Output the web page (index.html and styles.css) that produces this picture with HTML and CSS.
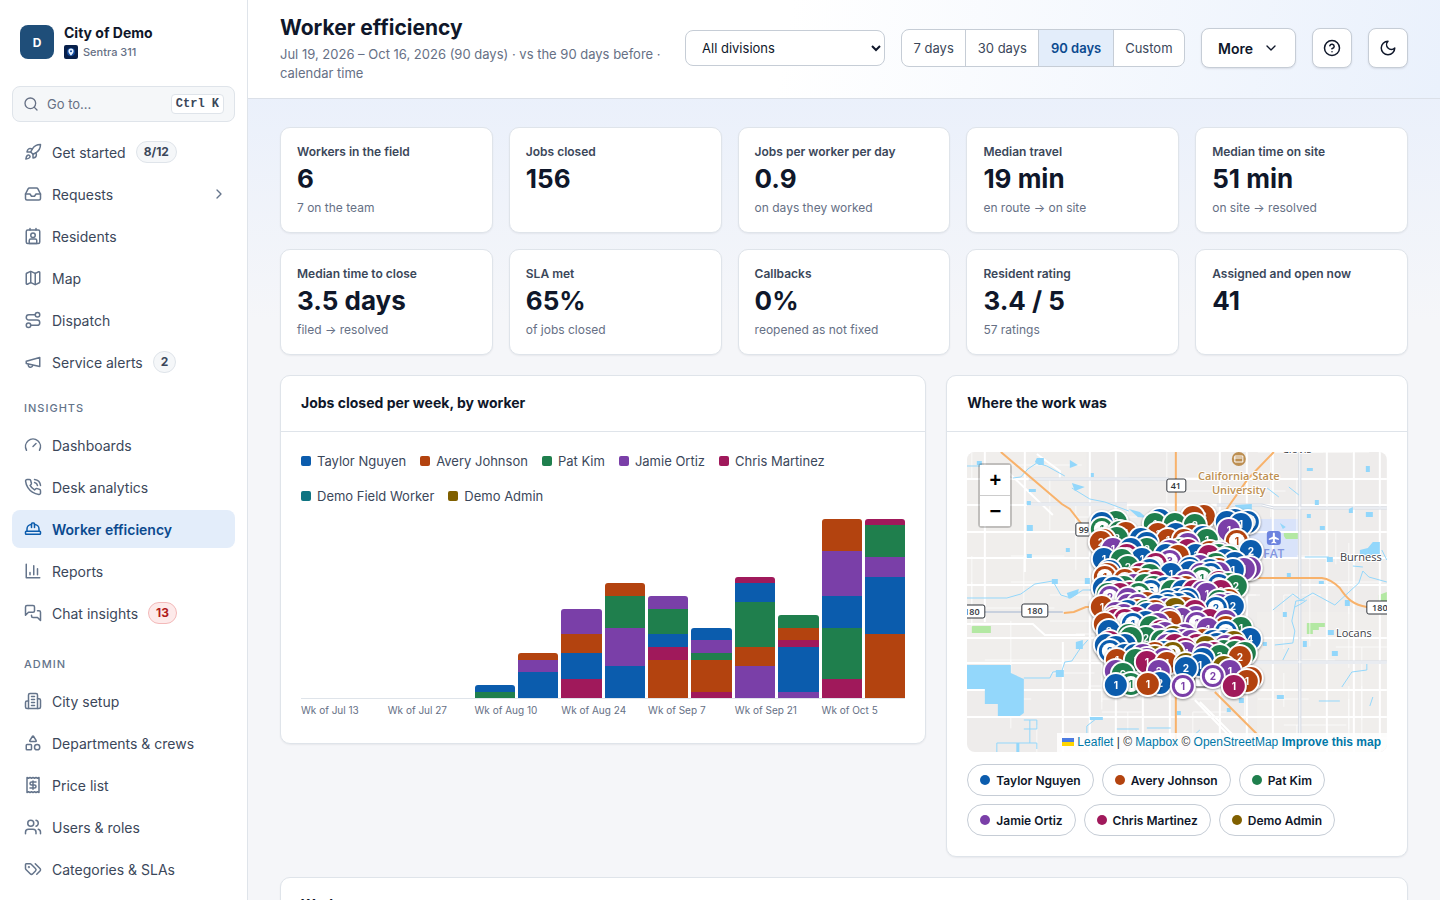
FILE: index.html
```html
<!DOCTYPE html>
<html lang="en">
<head>
<meta charset="utf-8">
<meta name="viewport" content="width=device-width, initial-scale=1">
<title>Worker efficiency</title>
<link rel="stylesheet" href="styles.css">
</head>
<body>
<div class="app">
  <aside class="sidebar">
    <div class="brand">
      <span class="brand-logo">D</span>
      <div class="brand-text">
        <span class="brand-name">City of Demo</span>
        <span class="brand-product">
          <svg width="14" height="14" viewBox="0 0 14 14" aria-hidden="true"><rect width="14" height="14" rx="2" fill="#071f4a"/><circle cx="7" cy="7" r="4" fill="#124a9c"/><path d="M7 3.6a2.6 2.6 0 0 0-2.6 2.6C4.400 8 7 10.600 7 10.600S9.600 8 9.600 6.200A2.600 2.600 0 0 0 7 3.600z" fill="#e8f2ff"/><circle cx="7" cy="6.300" r="1" fill="#124a9c"/></svg>
          Sentra 311
        </span>
      </div>
    </div>
    <button class="search" type="button">
      <svg class="icon" viewBox="0 0 24 24"><circle cx="11" cy="11" r="8"/><path d="m21 21-4.300-4.300"/></svg>
      <span class="search-text">Go to...</span>
      <kbd>Ctrl K</kbd>
    </button>
    <nav class="nav" aria-label="Main">
      <div class="nav-group">
        <a class="nav-item" href="#"><svg class="icon" viewBox="0 0 24 24"><path d="M4.500 16.500c-1.500 1.260-2 5-2 5s3.740-.5 5-2c.71-.84.7-2.130-.09-2.910a2.180 2.180 0 0 0-2.910-.09z"/><path d="m12 15-3-3a22 22 0 0 1 2-3.950A12.880 12.880 0 0 1 22 2c0 2.720-.78 7.500-6 11a22.350 22.350 0 0 1-4 2z"/><path d="M9 12H4s.55-3.030 2-4c1.620-1.080 5 0 5 0"/><path d="M12 15v5s3.030-.55 4-2c1.080-1.620 0-5 0-5"/></svg>Get started<span class="badge">8/12</span></a>
        <a class="nav-item" href="#"><svg class="icon" viewBox="0 0 24 24"><path d="M22 12h-6l-2 3h-4l-2-3H2"/><path d="M5.450 5.110 2 12v6a2 2 0 0 0 2 2h16a2 2 0 0 0 2-2v-6l-3.450-6.890A2 2 0 0 0 16.760 4H7.240a2 2 0 0 0-1.790 1.110z"/></svg>Requests<svg class="icon chevron" viewBox="0 0 24 24"><path d="m9 18 6-6-6-6"/></svg></a>
        <a class="nav-item" href="#"><svg class="icon" viewBox="0 0 24 24"><path d="M17 18a2 2 0 0 0-2-2H9a2 2 0 0 0-2 2v4h10z"/><rect x="3" y="4" width="18" height="18" rx="2"/><circle cx="12" cy="11" r="3"/><path d="M8 2v2M16 2v2"/></svg>Residents</a>
        <a class="nav-item" href="#"><svg class="icon" viewBox="0 0 24 24"><path d="M14.106 5.553a2 2 0 0 0 1.788 0l3.659-1.830A1 1 0 0 1 21 4.619v12.764a1 1 0 0 1-.553.894l-4.553 2.277a2 2 0 0 1-1.788 0l-4.212-2.106a2 2 0 0 0-1.788 0l-3.659 1.830A1 1 0 0 1 3 19.381V6.618a1 1 0 0 1 .553-.894l4.553-2.277a2 2 0 0 1 1.788 0z"/><path d="M15 5.764v15M9 3.236v15"/></svg>Map</a>
        <a class="nav-item" href="#"><svg class="icon" viewBox="0 0 24 24"><circle cx="6" cy="19" r="3"/><path d="M9 19h8.500a3.500 3.500 0 0 0 0-7h-11a3.500 3.500 0 0 1 0-7H15"/><circle cx="18" cy="5" r="3"/></svg>Dispatch</a>
        <a class="nav-item" href="#"><svg class="icon" viewBox="0 0 24 24"><path d="m3 11 18-5v12L3 14v-3z"/><path d="M11.600 16.800a3 3 0 1 1-5.800-1.600"/></svg>Service alerts<span class="badge">2</span></a>
      </div>
      <h2 class="nav-title">Insights</h2>
      <div class="nav-group">
        <a class="nav-item" href="#"><svg class="icon" viewBox="0 0 24 24"><path d="m12 14 4-4"/><path d="M3.340 19a10 10 0 1 1 17.320 0"/></svg>Dashboards</a>
        <a class="nav-item" href="#"><svg class="icon" viewBox="0 0 24 24"><path d="M22 16.920v3a2 2 0 0 1-2.180 2 19.790 19.790 0 0 1-8.630-3.070 19.500 19.500 0 0 1-6-6 19.790 19.790 0 0 1-3.070-8.670A2 2 0 0 1 4.110 2h3a2 2 0 0 1 2 1.720c.127.960.361 1.903.7 2.810a2 2 0 0 1-.45 2.110L8.090 9.910a16 16 0 0 0 6 6l1.270-1.270a2 2 0 0 1 2.110-.45c.907.339 1.850.573 2.810.7A2 2 0 0 1 22 16.920z"/><path d="M14.050 2a9 9 0 0 1 8 7.940M14.050 6A5 5 0 0 1 18 10"/></svg>Desk analytics</a>
        <a class="nav-item active" href="#" aria-current="page"><svg class="icon" viewBox="0 0 24 24"><path d="M2 18a1 1 0 0 0 1 1h18a1 1 0 0 0 1-1v-2a1 1 0 0 0-1-1H3a1 1 0 0 0-1 1v2z"/><path d="M10 10V5a1 1 0 0 1 1-1h2a1 1 0 0 1 1 1v5"/><path d="M4 15v-3a6 6 0 0 1 6-6M14 6a6 6 0 0 1 6 6v3"/></svg>Worker efficiency</a>
        <a class="nav-item" href="#"><svg class="icon" viewBox="0 0 24 24"><path d="M3 3v18h18M18 17V9M13 17V5M8 17v-3"/></svg>Reports</a>
        <a class="nav-item" href="#"><svg class="icon" viewBox="0 0 24 24"><path d="M14 9a2 2 0 0 1-2 2H6l-4 4V4a2 2 0 0 1 2-2h8a2 2 0 0 1 2 2z"/><path d="M18 9h2a2 2 0 0 1 2 2v11l-4-4h-6a2 2 0 0 1-2-2v-1"/></svg>Chat insights<span class="badge alert">13</span></a>
      </div>
      <h2 class="nav-title spaced">Admin</h2>
      <div class="nav-group">
        <a class="nav-item" href="#"><svg class="icon" viewBox="0 0 24 24"><path d="M6 22V4a2 2 0 0 1 2-2h8a2 2 0 0 1 2 2v18Z"/><path d="M6 12H4a2 2 0 0 0-2 2v6a2 2 0 0 0 2 2h2M18 9h2a2 2 0 0 1 2 2v9a2 2 0 0 1-2 2h-2M10 6h4M10 10h4M10 14h4M10 18h4"/></svg>City setup</a>
        <a class="nav-item" href="#"><svg class="icon" viewBox="0 0 24 24"><path d="M8.300 10a.7.7 0 0 1-.626-1.079L11.400 3a.7.7 0 0 1 1.198-.043L16.300 8.900a.7.7 0 0 1-.572 1.100Z"/><rect x="3" y="14" width="7" height="7" rx="1"/><circle cx="17.500" cy="17.500" r="3.500"/></svg>Departments &amp; crews</a>
        <a class="nav-item" href="#"><svg class="icon" viewBox="0 0 24 24"><path d="M4 2v20l2-1 2 1 2-1 2 1 2-1 2 1 2-1 2 1V2l-2 1-2-1-2 1-2-1-2 1-2-1-2 1Z"/><path d="M16 8h-6a2 2 0 1 0 0 4h4a2 2 0 1 1 0 4H8M12 17.500v-11"/></svg>Price list</a>
        <a class="nav-item" href="#"><svg class="icon" viewBox="0 0 24 24"><path d="M16 21v-2a4 4 0 0 0-4-4H6a4 4 0 0 0-4 4v2"/><circle cx="9" cy="7" r="4"/><path d="M22 21v-2a4 4 0 0 0-3-3.870M16 3.130a4 4 0 0 1 0 7.750"/></svg>Users &amp; roles</a>
        <a class="nav-item" href="#"><svg class="icon" viewBox="0 0 24 24"><path d="m15 5 6.300 6.300a2.400 2.400 0 0 1 0 3.400L17 19"/><path d="M9.586 5.586A2 2 0 0 0 8.172 5H3a1 1 0 0 0-1 1v5.172a2 2 0 0 0 .586 1.414L8.290 18.290a2.426 2.426 0 0 0 3.420 0l3.580-3.580a2.426 2.426 0 0 0 0-3.420z"/><circle cx="6.500" cy="9.500" r=".5"/></svg>Categories &amp; SLAs</a>
      </div>
    </nav>
  </aside>

  <div class="page">
    <header class="topbar">
      <div class="heading">
        <h1>Worker efficiency</h1>
        <p>Jul 19, 2026 – Oct 16, 2026 (90 days) · vs the 90 days before · calendar time</p>
      </div>
      <select class="divisions" aria-label="Division"><option>All divisions</option></select>
      <div class="segmented" role="group" aria-label="Period">
        <button type="button">7 days</button>
        <button type="button">30 days</button>
        <button type="button" class="selected" aria-pressed="true">90 days</button>
        <button type="button">Custom</button>
      </div>
      <button type="button" class="btn">More<svg class="icon small" viewBox="0 0 24 24"><path d="m6 9 6 6 6-6"/></svg></button>
      <button type="button" class="btn square" aria-label="Help"><svg class="icon" viewBox="0 0 24 24"><circle cx="12" cy="12" r="10"/><path d="M9.090 9a3 3 0 0 1 5.830 1c0 2-3 3-3 3M12 17h.01"/></svg></button>
      <button type="button" class="btn square" aria-label="Dark mode"><svg class="icon" viewBox="0 0 24 24"><path d="M12 3a6 6 0 0 0 9 9 9 9 0 1 1-9-9Z"/></svg></button>
    </header>

    <main class="content">
      <section class="stats" aria-label="Summary">
        <article class="stat"><h2>Workers in the field</h2><strong>6</strong><p>7 on the team</p></article>
        <article class="stat"><h2>Jobs closed</h2><strong>156</strong></article>
        <article class="stat"><h2>Jobs per worker per day</h2><strong>0.9</strong><p>on days they worked</p></article>
        <article class="stat"><h2>Median travel</h2><strong>19 min</strong><p>en route → on site</p></article>
        <article class="stat"><h2>Median time on site</h2><strong>51 min</strong><p>on site → resolved</p></article>
        <article class="stat"><h2>Median time to close</h2><strong>3.5 days</strong><p>filed → resolved</p></article>
        <article class="stat"><h2>SLA met</h2><strong>65%</strong><p>of jobs closed</p></article>
        <article class="stat"><h2>Callbacks</h2><strong>0%</strong><p>reopened as not fixed</p></article>
        <article class="stat"><h2>Resident rating</h2><strong>3.4 / 5</strong><p>57 ratings</p></article>
        <article class="stat"><h2>Assigned and open now</h2><strong>41</strong></article>
      </section>

      <div class="panels">
        <section class="panel">
          <h2 class="panel-title">Jobs closed per week, by worker</h2>
          <div class="panel-body">
            <ul class="legend">
              <li><i class="blue"></i>Taylor Nguyen</li>
              <li><i class="orange"></i>Avery Johnson</li>
              <li><i class="green"></i>Pat Kim</li>
              <li><i class="purple"></i>Jamie Ortiz</li>
              <li><i class="magenta"></i>Chris Martinez</li>
              <li><i class="teal"></i>Demo Field Worker</li>
              <li><i class="brown"></i>Demo Admin</li>
            </ul>
            <div class="bars" id="bars"></div>
            <div class="weeks">
              <span>Wk of Jul 13</span><span>Wk of Jul 27</span><span>Wk of Aug 10</span><span>Wk of Aug 24</span><span>Wk of Sep 7</span><span>Wk of Sep 21</span><span>Wk of Oct 5</span>
            </div>
          </div>
        </section>

        <section class="panel">
          <h2 class="panel-title">Where the work was</h2>
          <div class="panel-body">
            <div class="map">
              <svg class="map-canvas" viewBox="0 0 420 300" preserveAspectRatio="xMidYMid slice" role="img" aria-label="Map of closed jobs">
                <rect width="420" height="300" fill="#eeeceb"/>
                <path d="M0 0h120v210H0zM290 160h130v140H290z" fill="#f1efee" opacity=".5"/>
                <path d="M260 67h71v38h-71z" fill="#d9e3fa"/>
                <path d="M317 81l14-2v8h-12l-2-3zM340 171h18v4h-6v3h-6v4h-6zM5 174h19v7H5zM412 143l8-3v10h-8z" fill="#b3e8a3"/>
                <g fill="none" stroke="#fff" stroke-width="1" id="streets"/>
                <g fill="none" stroke="#fff" stroke-width="2">
                  <path d="M0 27h420M0 53h420M0 80h420M0 106h420M0 133h420M0 186h130M280 186h140M0 211h420M0 238h420M0 265h420M18 0v170M58 0v120M123 0v300M149 0v300M253 0v300M280 0v300M306 0v300M360 0v300M387 0v300M413 0v300M96 190v110M176 220v80M203 220v80M36 15l50 48M70 2l23 17v8M0 172h66l12 11h40"/>
                  <path d="M233 250l50 50M228 248l50 52"/>
                </g>
                <g fill="none" stroke="#d3d9e3" stroke-width="3"><path d="M333 0v300M60 52h100M250 53h45l12 3h113M280 210h140M62 27h140"/></g>
                <g fill="none" stroke="#fff" stroke-width="1"><path d="M333 0v300M60 52h100M250 53h45l12 3h113M280 210h140M62 27h140"/></g>
                <path d="M0 160h96" stroke="#c9d1de" stroke-width="2"/>
                <g fill="#93d7fb">
                  <path d="M0 213h44v8l13 6v34l-4 3H31v-12H18v-15H0zM70 6h7v7h-5l-4-3zM103 8l8 5-8 3zM105 31l13 4-10 4zM124 21h3v4h-3zM62 37h7v3h-7zM60 49h4v4h-4zM60 73h6v6h-6zM60 102h5v4h-5zM10 9h5v4h-5zM99 96h4v4h-4zM162 57l11 3 7 6-9-1zM85 127h6v5h-6zM118 126h5v6h-5zM100 141l12-4-1 5-9 5zM109 190l7-2v9h-7zM89 218h8v7h-8zM123 265h13v3h-13zM210 259h4v4h-4zM268 53l17-1v6h-14zM340 16h6v3h-6zM399 14h4v6h-4zM399 60h7v5h-7zM353 74h5v4h-5zM360 105h6v5h-6zM393 98l8-2 5-6h7v12l-20 2zM320 121h4v4h-4zM382 57l4-2v6h-4zM352 129h5v3h-5zM340 62h4v4h-4zM348 48h4v5h-4zM361 178h6v5h-6zM365 199h6v5h-6zM336 189h4v6h-4zM316 160h4v5h-4zM296 190h4v4h-4zM310 243h7v4h-7zM260 256h4v4h-4zM272 246h5v5h-5zM378 148h5v6h-5zM313 71l6 4-3 2z"/>
                </g>
                <g fill="none" stroke="#93d7fb" stroke-width="1">
                  <path d="M46 26l8-1 7-8 9-6 10 3 18 10M0 14h14M105 36l18 11 15 3 24 9M0 146h40l14-4 14-10 18-3 8 14 10 3 12-8h12M57 226h26l3-6 9-1 3-9 7-1 8-12 8-9M262 208l14-14 12-2M308 193l18-2 2-12-3-10 4-20 9-1M316 208l6-12M328 155l6-3 6-4M420 130l-18-5-6-6-4 12-24 22-22-12-12 7-8-6-20 16M386 114l10 1M415 98l5 10M338 105h24M299 35l13 10M322 35l10 8M375 235l10-15 15-2v-6M352 249h21M403 254l3-9M30 300v-9h40v6M63 268v23M57 268h13v9H57M120 281v-7l9-7M150 277h22M180 276h24M225 285l8-7"/>
                </g>
                <path d="M51 291v9" stroke="#93d7fb" stroke-width="3"/>
                <g fill="none" stroke="#f8b26b" stroke-width="2">
                  <path d="M34 0l61 52 8 5 35 45M248 240l45 45M209 0v80M209 235v55M307 0l-26 27-19 27-14 20M250 126h105c8 1 13 5 18 10 7 11 14 17 27 19h12M97 161l10-1 12-5h18"/>
                </g>
                <g class="road-shields">
                  <rect x="200" y="27" width="19" height="13" rx="2"/><text x="209" y="37">41</text>
                  <rect x="109" y="71" width="22" height="13" rx="2"/><text x="117" y="81">99</text>
                  <rect x="55" y="152" width="26" height="13" rx="2"/><text x="68" y="162">180</text>
                  <rect x="-8" y="153" width="26" height="13" rx="2"/><text x="5" y="163">180</text>
                  <rect x="400" y="149" width="26" height="13" rx="2"/><text x="413" y="159">180</text>
                  <rect x="228" y="223" width="18" height="12" rx="2"/>
                </g>
                <circle cx="272" cy="7" r="7" fill="#bd8f52"/><path d="M268 4h8v6h-8z" fill="none" stroke="#fff"/><path d="M267 6h8" stroke="#fff"/>
                <g class="campus"><text x="272" y="28">California State</text><text x="272" y="42">University</text></g>
                <rect x="300" y="79" width="14" height="14" rx="3" fill="#6c83df"/><path d="M307 80.500c.8 0 1 .8 1 1.500v2.500l4 2.300v1.200l-4-1v2.500l1.500 1.200v.8l-2.500-.6-2.500.6v-.8l1.500-1.200V87l-4 1v-1.200l4-2.300V82c0-.7.2-1.500 1-1.500z" fill="#fff"/>
                <text class="airport" x="307" y="106">FAT</text>
                <text class="place" x="394" y="109">Burness</text>
                <text class="place" x="387" y="185">Locans</text>
                <text class="place" x="330" y="1">Clovis</text>
                <g class="pins" id="pins"></g>
              </svg>
              <div class="zoom-control">
                <button type="button" aria-label="Zoom in">+</button>
                <button type="button" aria-label="Zoom out">−</button>
              </div>
              <div class="attribution"><svg width="12" height="8" viewBox="0 0 12 8" aria-hidden="true"><path fill="#4c7be1" d="M0 0h12v4H0z"/><path fill="#ffd500" d="M0 4h12v4H0z"/></svg> <a href="#">Leaflet</a> | © <a href="#">Mapbox</a> © <a href="#">OpenStreetMap</a> <a href="#"><b>Improve this map</b></a></div>
            </div>
            <div class="chips">
              <button type="button"><i class="blue"></i>Taylor Nguyen</button>
              <button type="button"><i class="orange"></i>Avery Johnson</button>
              <button type="button"><i class="green"></i>Pat Kim</button>
              <button type="button"><i class="purple"></i>Jamie Ortiz</button>
              <button type="button"><i class="magenta"></i>Chris Martinez</button>
              <button type="button"><i class="brown"></i>Demo Admin</button>
            </div>
          </div>
        </section>
      </div>

      <section class="panel">
        <h2 class="panel-title">Workers</h2>
      </section>
    </main>
  </div>
</div>
<script src="app.js"></script>
</body>
</html>
```

FILE: styles.css
```css
* { box-sizing: border-box; }

:root {
  --ink: #0f172a;
  --text: #3b475a;
  --muted: #667085;
  --line: #dfe4ea;
  --line-strong: #c6cdd6;
  --surface: #f5f7f9;
  --accent: #0b4a8f;
  --accent-soft: #e3edfa;
}

html, body { height: 100%; }

body {
  margin: 0;
  font-family: Inter, "Liberation Sans", sans-serif;
  font-size: 13px;
  color: var(--ink);
}

h1, h2, p, ul { margin: 0; padding: 0; }
button, select { font: inherit; color: inherit; margin: 0; }
a { text-decoration: none; color: inherit; }

.app {
  display: flex;
  height: 100vh;
  overflow: hidden;
}

/* Icons */
.icon {
  width: 18px;
  height: 18px;
  flex: none;
  fill: none;
  stroke: currentColor;
  stroke-width: 2;
  stroke-linecap: round;
  stroke-linejoin: round;
}
.icon.small { width: 16px; height: 16px; }

/* Worker colours */
.blue { background: #0b5cad; }
.orange { background: #b3430f; }
.green { background: #1f7f4d; }
.purple { background: #7a3fa8; }
.magenta { background: #a0195b; }
.teal { background: #0f7482; }
.brown { background: #806000; }

/* Sidebar */
.sidebar {
  width: 248px;
  flex: none;
  overflow: hidden;
  padding: 22px 12px 0;
  background: #fff;
  border-right: 1px solid var(--line);
}
.brand {
  display: flex;
  align-items: center;
  gap: 10px;
  height: 40px;
  padding: 0 8px;
}
.brand-logo {
  display: grid;
  place-items: center;
  width: 34px;
  height: 34px;
  border-radius: 8px;
  background: #1f4e79;
  color: #fff;
  font-size: 12px;
  font-weight: 700;
}
.brand-text { display: flex; flex-direction: column; }
.brand-name { font-size: 14px; line-height: 20px; font-weight: 700; }
.brand-product {
  display: flex;
  align-items: center;
  gap: 5px;
  font-size: 11px;
  line-height: 18px;
  font-weight: 500;
  color: var(--muted);
}
.search {
  display: flex;
  align-items: center;
  gap: 8px;
  width: 100%;
  height: 36px;
  margin: 24px 0 11px;
  padding: 0 10px;
  border: 1px solid var(--line);
  border-radius: 8px;
  background: var(--surface);
  color: var(--muted);
  text-align: left;
}
.search .icon { width: 16px; height: 16px; }
.search-text { flex: 1; }
kbd {
  padding: 0 4px;
  border: 1px solid var(--line);
  border-radius: 4px;
  background: #fff;
  color: var(--text);
  font: bold 12px/18px "Liberation Mono", monospace;
}
.nav-group { display: flex; flex-direction: column; gap: 4px; }
.nav-item {
  display: flex;
  align-items: center;
  gap: 10px;
  height: 38px;
  padding: 0 12px;
  border-radius: 8px;
  font-size: 14px;
  color: var(--text);
}
.nav-item .icon { color: #64748b; }
.nav-item .chevron { width: 16px; height: 16px; margin-left: auto; margin-right: -4px; }
.nav-item.active { background: var(--accent-soft); color: var(--accent); font-weight: 600; }
.nav-item.active .icon { color: #0b5cad; }
.badge {
  padding: 0 7px;
  border: 1px solid var(--line);
  border-radius: 11px;
  background: var(--surface);
  color: var(--text);
  font-size: 12px;
  line-height: 20px;
  font-weight: 700;
}
.badge.alert { background: #fdeaea; border-color: #f3b9b9; color: #b01c1c; }
.nav-title {
  padding: 0 12px;
  margin: 19px 0 10px;
  font-size: 11px;
  line-height: 16px;
  font-weight: 500;
  letter-spacing: 1px;
  text-transform: uppercase;
  color: #64748b;
}
.nav-title.spaced { margin-top: 24px; }

/* Page */
.page {
  flex: 1;
  min-width: 0;
  overflow: hidden;
  background: linear-gradient(#eaf0fb 90px, #f5f6f9 320px);
}
.topbar {
  display: flex;
  align-items: center;
  gap: 16px;
  min-height: 99px;
  padding: 0 32px 2px;
  border-bottom: 1px solid #dbe0e8;
  background: linear-gradient(100deg, #fff 45%, #eaf1fc);
}
.heading { flex: 1; min-width: 0; }
h1 { font-size: 21px; line-height: 28px; font-weight: 700; }
.heading p { margin-top: 3px; font-size: 13px; line-height: 19px; color: var(--muted); }
.divisions {
  width: 200px;
  height: 36px;
  padding: 0 12px;
  border: 1px solid var(--line-strong);
  border-radius: 8px;
  background: #fff;
}
.segmented {
  display: flex;
  width: 284px;
  height: 38px;
  border: 1px solid var(--line-strong);
  border-radius: 8px;
  overflow: hidden;
  background: #fff;
}
.segmented button {
  flex: 1 1 auto;
  padding: 0 8px;
  border: 0;
  border-left: 1px solid var(--line-strong);
  background: none;
  color: var(--text);
}
.segmented button:first-child { border-left: 0; }
.segmented .selected { background: var(--accent-soft); color: var(--accent); font-weight: 600; }
.btn {
  display: flex;
  align-items: center;
  justify-content: center;
  gap: 10px;
  height: 40px;
  padding: 0 16px;
  border: 1px solid var(--line-strong);
  border-radius: 8px;
  background: #fff;
  box-shadow: 0 1px 2px rgba(15, 23, 42, .1);
  font-size: 14px;
  font-weight: 600;
}
.btn.square { width: 40px; padding: 0; }

.content {
  display: flex;
  flex-direction: column;
  gap: 20px;
  padding: 28px 32px;
}
.stats { display: grid; grid-template-columns: repeat(5, 1fr); gap: 16px; }
.stat, .panel {
  background: #fff;
  border: 1px solid var(--line);
  border-radius: 10px;
  box-shadow: 0 1px 2px rgba(15, 23, 42, .06);
}
.stat { min-height: 106px; padding: 14px 16px; }
.stat h2 { font-size: 12px; line-height: 20px; font-weight: 600; color: var(--text); }
.stat strong { display: block; font-size: 26px; line-height: 34px; font-weight: 700; }
.stat p { margin-top: 2px; font-size: 12px; line-height: 20px; color: var(--muted); }

.panels {
  display: grid;
  grid-template-columns: 7fr 5fr;
  gap: 20px;
  align-items: start;
}
.panel-title {
  padding: 17px 20px 18px;
  border-bottom: 1px solid var(--line);
  font-size: 14px;
  line-height: 20px;
  font-weight: 700;
}
.panel-body { padding: 20px; }

.legend {
  display: flex;
  flex-wrap: wrap;
  gap: 17px 14px;
  list-style: none;
  color: var(--text);
  line-height: 18px;
}
.legend li { display: flex; align-items: center; gap: 6px; }
.legend i { width: 10px; height: 10px; border-radius: 2px; }

.bars {
  display: grid;
  grid-template-columns: repeat(14, 1fr);
  gap: 3px;
  align-items: end;
  height: 181px;
  margin-top: 13px;
  border-bottom: 1px solid var(--line);
}
.bar {
  display: flex;
  flex-direction: column;
  border-radius: 3px 3px 0 0;
  overflow: hidden;
}
.weeks {
  display: grid;
  grid-template-columns: repeat(7, 1fr);
  gap: 3px;
  min-height: 22px;
  margin-top: 2px;
  font-size: 10px;
  line-height: 18px;
  color: var(--muted);
}

/* Map */
.map { position: relative; height: 300px; border-radius: 8px; overflow: hidden; }
.map-canvas { display: block; width: 100%; height: 100%; }
.map-canvas text { font-family: "Open Sans", sans-serif; text-anchor: middle; }
.road-shields rect { fill: #fff; stroke: #30343b; }
.road-shields text { font-size: 9px; font-weight: 600; fill: #30343b; }
.campus text { font-size: 11px; font-weight: 600; fill: #bd8f52; stroke: #fff; stroke-width: 2; paint-order: stroke; }
.map-canvas .airport { font-size: 12px; font-weight: 600; fill: #8496e0; }
.map-canvas .place { font-size: 11px; fill: #3c4046; stroke: #fff; stroke-width: 2; paint-order: stroke; }
.pins g { filter: drop-shadow(0 1px 1px rgba(0, 0, 0, .4)); }
.map-canvas .pins text { font-family: Inter, sans-serif; font-size: 10px; font-weight: 700; }
.zoom-control {
  position: absolute;
  top: 11px;
  left: 11px;
  display: flex;
  flex-direction: column;
  border: 2px solid rgba(0, 0, 0, .2);
  border-radius: 4px;
  background-clip: padding-box;
}
.zoom-control button {
  width: 30px;
  height: 30px;
  padding: 0;
  border: 0;
  background: #fff;
  color: #000;
  font: bold 20px/30px "Liberation Sans", sans-serif;
}
.zoom-control button + button { height: 31px; border-top: 1px solid #ccc; }
.attribution {
  position: absolute;
  right: 0;
  bottom: 0;
  padding: 0 6px 0 5px;
  background: rgba(255, 255, 255, .85);
  font: 12px/19px "Liberation Sans", sans-serif;
  color: #333;
  white-space: nowrap;
}
.attribution a { color: #0078a8; }

.chips { display: flex; flex-wrap: wrap; gap: 8px; margin-top: 12px; }
.chips button {
  display: flex;
  align-items: center;
  gap: 6px;
  height: 32px;
  padding: 0 12px;
  border: 1px solid var(--line-strong);
  border-radius: 16px;
  background: #fff;
  font-size: 12px;
  font-weight: 600;
}
.chips i { width: 10px; height: 10px; border-radius: 50%; }
```

FILE: app.js
```js
const NAMES = { b: 'blue', o: 'orange', g: 'green', p: 'purple', m: 'magenta', n: 'brown' };
const COLORS = { b: '#0b5cad', o: '#b3430f', g: '#1f7f4d', p: '#7a3fa8', m: '#a0195b', n: '#806000' };

// Jobs per week, each bar listed from top to bottom.
const weeks = ['', '', '', '', 'b1 g1', 'o1 p2 b4', 'p4 o3 b4 m3', 'o2 g5 p6 b5', 'p2 g4 b2 m2 o6',
  'b2 p2 g1 o5 m1', 'm1 b3 g7 o3 p5', 'g2 o2 m1 b7 p1', 'o5 p7 b5 g8 m3', 'm1 g5 p3 b9 o10'];
const most = 28;
const chart = document.getElementById('bars');
weeks.forEach(week => {
  const bar = document.createElement('div');
  bar.className = 'bar';
  const parts = week.split(' ').filter(Boolean).map(p => [p[0], Number(p.slice(1))]);
  const total = parts.reduce((sum, p) => sum + p[1], 0);
  bar.style.height = (total / most * 179) + 'px';
  parts.forEach(([key, count]) => {
    const part = document.createElement('div');
    part.className = NAMES[key];
    part.style.flex = count + ' 0 0';
    bar.append(part);
  });
  chart.append(bar);
});

const SVG = 'http://www.w3.org/2000/svg';
function draw(name, attrs, parent) {
  const el = document.createElementNS(SVG, name);
  for (const key in attrs) el.setAttribute(key, attrs[key]);
  parent.append(el);
  return el;
}

let seed = 11;
const random = () => (seed = (seed * 16807) % 2147483647) / 2147483647;

// Side streets
const streets = document.getElementById('streets');
for (let i = 0; i < 90; i++) {
  const x = Math.round(random() * 30) * 13 + 5;
  const y = Math.round(random() * 22) * 13;
  const length = 26 + random() * 50;
  draw('path', { d: i % 2 ? `M${x} ${y}h${length}` : `M${x} ${y}v${length}`, opacity: 0.7 }, streets);
}

// Stops: x y worker jobs; a trailing h marks a ring.
const stops = `135 71 b 2;135 77 g 1 h;149 70 g 2;159 81 o 1;153 80 g 1;150 86 g 2;134 90 o 2;146 97 p 1;137 107 b 1;155 108 g 1;193 68 b 1;188 72 g 1;191 82 o 1;201 88 o 1;180 91 b 1;180 97 g 2;175 107 b 1;203 109 p 3 h;161 115 g 2;138 125 o 1 h;204 122 b 1;184 139 b 5 h;143 145 p 2 h;226 65 o 2;237 64 o 3;228 73 g 2;260 70 b 1;268 68 b 1;281 70 b 1 h;274 72 b 1;262 78 p 1;270 89 o 1 h;284 99 b 2;283 116 p 1;277 117 p 1;266 118 b 1;229 103 b 1;240 88 g 1;235 126 g 1 h;269 134 g 2;240 142 p 1;142 179 b 2;179 186 g 2;166 172 b 1 h;143 199 b 2 h;150 208 o 1;180 210 m 1;192 219 p 2;149 219 p 1;156 222 g 6;149 233 b 1;164 232 g 1 h;181 232 o 1;193 231 b 2;216 234 p 1 h;266 154 b 2;249 156 b 2 h;215 167 p 1;274 176 g 1;283 187 b 4;273 205 o 2;253 204 g 3;219 201 p 4;219 216 b 2;233 213 b 1;263 219 p 1;280 229 o 1;284 226 o 1;246 224 p 2 h;267 234 m 1;241 177 p 1;243 168 m 1;135 155 o 1;138 172 o 1`
  .split(';').map(s => {
    const [x, y, key, jobs, ring] = s.split(' ');
    return { x: +x, y: +y, key, jobs, ring: !!ring };
  });
const fixed = stops.slice();
const palette = 'bogpmbogpbogpmn';
for (let y = 72; y < 214; y += 6) {
  const right = y > 124 && y < 170 ? 268 : 282;
  for (let x = 137 + random() * 6; x < right; x += 8 + random() * 4) {
    const px = Math.round(x), py = Math.round(y + random() * 5);
    if (py < 82 && ((px > 162 && px < 186) || (px > 240 && px < 258))) continue;
    if (fixed.some(f => Math.abs(f.x - px) < 12 && py >= f.y - 1 && py - f.y < 11)) continue;
    stops.push({ x: px, y: py, key: palette[Math.floor(random() * palette.length)],
      jobs: random() < 0.7 ? 1 : 2, ring: random() < 0.18 });
  }
}
stops.sort((a, b) => a.y - b.y);
const pins = document.getElementById('pins');
stops.forEach(s => {
  const pin = draw('g', {}, pins);
  const color = COLORS[s.key];
  draw('circle', { cx: s.x, cy: s.y, r: 13, fill: '#fff' }, pin);
  draw('circle', { cx: s.x, cy: s.y, r: 11, fill: color }, pin);
  if (s.ring) draw('circle', { cx: s.x, cy: s.y, r: 8, fill: '#fff' }, pin);
  draw('text', { x: s.x, y: s.y + 4, fill: s.ring ? color : '#fff' }, pin).textContent = s.jobs;
});
```
